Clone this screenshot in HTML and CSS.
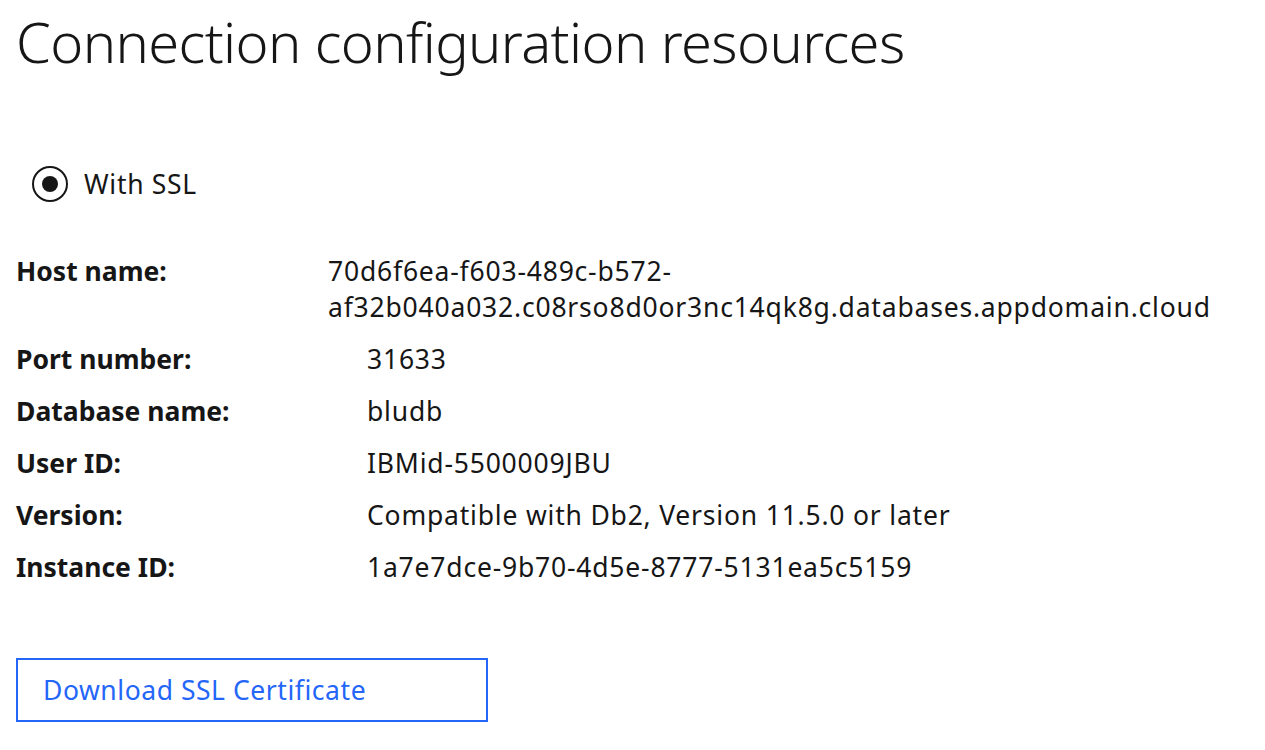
FILE: index.html
```html
<!DOCTYPE html>
<html lang="en">
<head>
<meta charset="utf-8">
<title>Connection configuration resources</title>
<link rel="stylesheet" href="styles.css">
</head>
<body>
<main class="page">
  <h1 class="title">Connection configuration resources</h1>

  <label class="radio">
    <span class="radio__circle"><span class="radio__dot"></span></span>
    <span class="radio__label">With SSL</span>
  </label>

  <dl class="details details--host">
    <dt class="details__label">Host name:</dt>
    <dd class="details__value">70d6f6ea-f603-489c-b572-af32b040a032.c08rso8d0or3nc14qk8g.databases.appdomain.cloud</dd>
  </dl>

  <dl class="details">
    <dt class="details__label">Port number:</dt>
    <dd class="details__value">31633</dd>
    <dt class="details__label">Database name:</dt>
    <dd class="details__value">bludb</dd>
    <dt class="details__label">User ID:</dt>
    <dd class="details__value">IBMid-5500009JBU</dd>
    <dt class="details__label">Version:</dt>
    <dd class="details__value">Compatible with Db2, Version 11.5.0 or later</dd>
    <dt class="details__label">Instance ID:</dt>
    <dd class="details__value">1a7e7dce-9b70-4d5e-8777-5131ea5c5159</dd>
  </dl>

  <button class="button" type="button">Download SSL Certificate</button>
</main>
</body>
</html>
```

FILE: styles.css
```css
* {
  box-sizing: border-box;
}

html, body {
  margin: 0;
  padding: 0;
  background: #ffffff;
}

body {
  font-family: "Noto Sans", "Open Sans", sans-serif;
  color: #161616;
}

.page {
  padding: 0 16px;
}

.title {
  margin: 0;
  padding-top: 9px;
  font-family: "Noto Sans", sans-serif;
  font-weight: 300;
  font-size: 56px;
  line-height: 64px;
  letter-spacing: -0.6px;
}

.radio {
  display: flex;
  align-items: center;
  gap: 16px;
  margin-top: 93px;
  padding-left: 16px;
}

.radio__circle {
  width: 36px;
  height: 36px;
  border: 2px solid #161616;
  border-radius: 50%;
  display: flex;
  align-items: center;
  justify-content: center;
}

.radio__dot {
  width: 16px;
  height: 16px;
  border-radius: 50%;
  background: #161616;
}

.radio__label {
  font-size: 26.5px;
  line-height: 36px;
  letter-spacing: 0.7px;
}

.details {
  display: grid;
  grid-template-columns: 351px 1fr;
  row-gap: 16px;
  margin: 0;
  font-size: 26.5px;
  line-height: 36px;
}

.details--host {
  grid-template-columns: 312px 1fr;
  margin-top: 51px;
  margin-bottom: 16px;
}

.details__label {
  font-weight: 700;
  margin: 0;
}

.details__value {
  margin: 0;
  letter-spacing: 0.8px;
}

.button {
  display: block;
  margin-top: 73px;
  width: 472px;
  height: 64px;
  padding: 0 0 0 25px;
  text-align: left;
  background: #ffffff;
  border: 2px solid #2466f8;
  color: #2466f8;
  font-family: "Noto Sans", sans-serif;
  font-size: 26.5px;
  letter-spacing: 0.55px;
  cursor: pointer;
}
```
